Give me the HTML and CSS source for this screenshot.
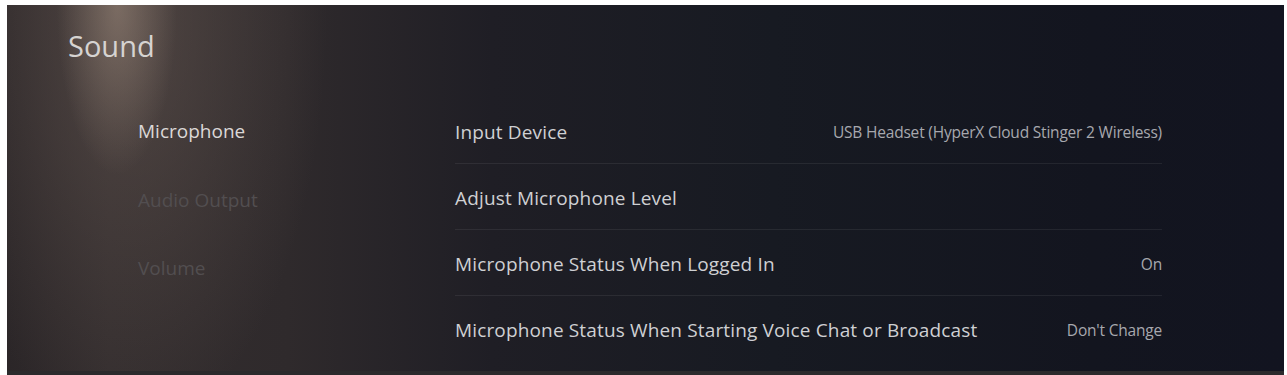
FILE: index.html
```html
<!DOCTYPE html>
<html lang="en">
<head>
<meta charset="utf-8">
<title>Sound</title>
<link rel="stylesheet" href="styles.css">
</head>
<body>
<div class="screen">
  <h1 class="title">Sound</h1>
  <div class="content">
    <nav class="nav">
      <div class="nav-item active">Microphone</div>
      <div class="nav-item">Audio Output</div>
      <div class="nav-item">Volume</div>
    </nav>
    <ul class="list">
      <li class="row"><span class="label">Input Device</span><span class="value">USB Headset (HyperX Cloud Stinger 2 Wireless)</span></li>
      <li class="row"><span class="label">Adjust Microphone Level</span><span class="value"></span></li>
      <li class="row"><span class="label">Microphone Status When Logged In</span><span class="value">On</span></li>
      <li class="row"><span class="label">Microphone Status When Starting Voice Chat or Broadcast</span><span class="value">Don't Change</span></li>
    </ul>
  </div>
</div>
</body>
</html>
```

FILE: styles.css
```css
html, body {
  margin: 0;
  padding: 0;
  background: #ffffff;
  height: 375px;
  overflow: hidden;
}
body {
  padding: 5px 3px 0 7px;
  font-family: "Open Sans", "Noto Sans", sans-serif;
}
.screen {
  height: 366px;
  border-bottom: 4px solid #2b2a2c;
  box-sizing: content-box;
  background:
    radial-gradient(ellipse 60px 170px at 110px 0px, rgba(165,145,130,0.5), rgba(165,145,130,0) 100%),
    radial-gradient(ellipse 200px 420px at 120px 10px, rgba(110,95,88,0.5), rgba(110,95,88,0) 100%),
    linear-gradient(90deg, #2b2628 0%, #332d2e 8%, #2f2a2c 22%, #1f1e25 38%, #171a22 60%, #13151f 85%, #121420 100%);
  display: flex;
  flex-direction: column;
}
.title {
  margin: 0;
  padding: 24px 0 0 61px;
  height: 93px;
  box-sizing: border-box;
  font-weight: 400;
  font-size: 29px;
  line-height: 34px;
  color: #d6d3d1;
}
.content {
  display: grid;
  grid-template-columns: 317px 707px;
  padding-left: 131px;
}
.nav {
  display: grid;
  grid-template-rows: repeat(4, 66px);
}
.nav-item {
  font-size: 19px;
  color: #524e50;
  display: flex;
  align-items: center;
}
.nav-item:nth-child(2) {
  padding-top: 5px;
}
.nav-item:nth-child(3) {
  padding-top: 9px;
}
.nav-item.active {
  color: #dbd8d7;
}
.list {
  list-style: none;
  margin: 0;
  padding: 0;
}
.row {
  height: 66px;
  display: flex;
  align-items: center;
  justify-content: space-between;
  border-bottom: 1px solid rgba(255,255,255,0.07);
  box-sizing: border-box;
  padding-top: 2px;
}
.row:last-child {
  border-bottom: none;
}
.label {
  font-size: 19px;
  color: #cfd0d3;
  letter-spacing: 0.15px;
}
.value {
  font-size: 15.5px;
  color: #a7a8ae;
  letter-spacing: -0.2px;
}
```
